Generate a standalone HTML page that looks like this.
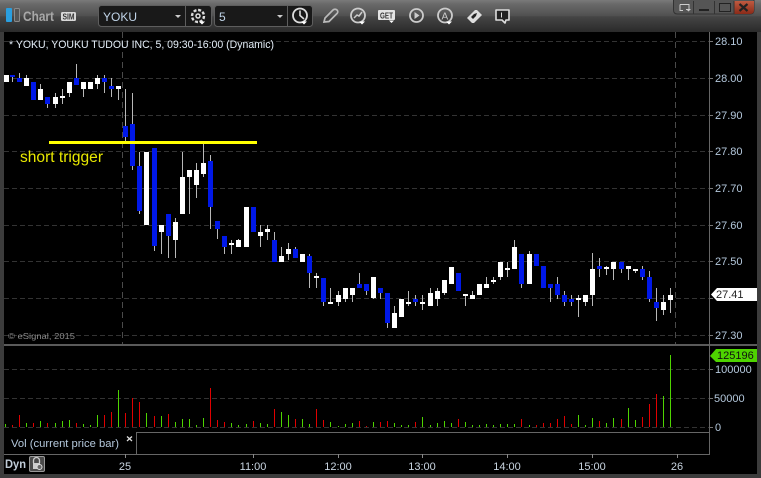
<!DOCTYPE html>
<html><head><meta charset="utf-8"><style>
html,body{margin:0;padding:0;background:#000;width:761px;height:478px;overflow:hidden}
svg{display:block;position:absolute;left:0;top:0}
text{font-family:"Liberation Sans",Arial,sans-serif}
</style></head><body>
<svg width="761" height="478" viewBox="0 0 761 478" xmlns="http://www.w3.org/2000/svg">
<defs>
<linearGradient id="tb" x1="0" y1="0" x2="0" y2="1"><stop offset="0" stop-color="#7a7a7a"/><stop offset=".12" stop-color="#6a6a6a"/><stop offset=".5" stop-color="#505050"/><stop offset=".52" stop-color="#454545"/><stop offset="1" stop-color="#2a2a2a"/></linearGradient>
<linearGradient id="cl" x1="0" y1="0" x2="0" y2="1"><stop offset="0" stop-color="#c05a40"/><stop offset="1" stop-color="#8a2a18"/></linearGradient>
</defs>
<rect width="761" height="478" fill="#3c3c3c"/>
<rect width="761" height="32" fill="url(#tb)"/>
<rect x="4" y="32" width="753" height="442" fill="#000"/>

<!-- toolbar left -->
<rect x="6" y="8" width="6" height="14" rx="1" fill="#2a9fe0"/>
<rect x="14.500" y="8.500" width="5" height="13" rx="1" fill="#555" stroke="#8a8a8a"/>
<text x="23" y="21" font-size="14" fill="#a8a8a8" font-weight="bold" textLength="31" lengthAdjust="spacingAndGlyphs">Chart</text>
<rect x="61" y="12" width="15" height="9" rx="1.500" fill="#d8d8d8"/>
<text x="62.500" y="19.500" font-size="8" font-weight="bold" fill="#333" textLength="12" lengthAdjust="spacingAndGlyphs">SIM</text>

<!-- dropdown 1 -->
<rect x="98.500" y="5.500" width="113" height="21" rx="3" fill="#191919" stroke="#5e5e5e"/>
<path d="M185.500 6V26" stroke="#5e5e5e"/>
<text x="103" y="21" font-size="12" fill="#c0d4e8">YOKU</text>
<path d="M175 15h6l-3 3z" fill="#ccc"/>
<circle cx="198" cy="16" r="6" fill="none" stroke="#ddd" stroke-width="2.400" stroke-dasharray="3 1.700"/>
<circle cx="198" cy="16" r="2" fill="none" stroke="#ddd" stroke-width="1.500"/>
<path d="M199 21.500h6l-3 3z" fill="#fff"/>

<!-- dropdown 2 -->
<rect x="214.500" y="5.500" width="98" height="21" rx="3" fill="#191919" stroke="#5e5e5e"/>
<path d="M287.500 6V26" stroke="#5e5e5e"/>
<text x="219" y="21" font-size="12" fill="#c0d4e8">5</text>
<path d="M277 15h6l-3 3z" fill="#ccc"/>
<circle cx="300" cy="15.500" r="7" fill="none" stroke="#ddd" stroke-width="1.800"/>
<path d="M300 10.500V15.500L304 19" fill="none" stroke="#ddd" stroke-width="1.600"/>
<path d="M301 21.500h6l-3 3z" fill="#fff"/>

<!-- pencil -->
<path d="M324 22l1-4 8-8c1-1 3-1 4 0s1 2.500 0 3.500l-8 8z" fill="none" stroke="#bbb" stroke-width="1.700"/>
<!-- gauge -->
<circle cx="358" cy="15.500" r="7" fill="none" stroke="#ccc" stroke-width="1.800"/>
<path d="M354 18l3-3 2 1 3-4" fill="none" stroke="#ccc" stroke-width="1.500"/>
<path d="M359 21.500h6l-3 3z" fill="#fff"/>
<!-- GET -->
<rect x="378" y="10" width="17" height="10" rx="1" fill="#e4e4e4"/>
<text x="380" y="18.500" font-size="8" font-weight="bold" fill="#333" textLength="13" lengthAdjust="spacingAndGlyphs">GET</text>
<path d="M389 20.500h5l-2.500 2.500z" fill="#fff"/>
<!-- play -->
<circle cx="416.500" cy="15.500" r="6.500" fill="none" stroke="#ccc" stroke-width="1.800"/>
<path d="M414.500 12l5 3.500-5 3.500z" fill="#ccc"/>
<!-- A -->
<circle cx="445" cy="15.500" r="7" fill="none" stroke="#ccc" stroke-width="1.800"/>
<text x="441.500" y="19.500" font-size="10" fill="#ccc">A</text>
<path d="M446 21.500h6l-3 3z" fill="#fff"/>
<!-- diamond -->
<path d="M467 18l8-8 2 0 5 5-8 8-2 0z" fill="#ddd"/>
<path d="M471 17l3-3 3-1-1 3-3 3z" fill="#222"/>
<!-- speech -->
<path d="M496 10h13v10h-3l-1 3-3-3h-6z" fill="#222" stroke="#ddd" stroke-width="1.600" stroke-linejoin="round"/>
<path d="M501.500 12.500v5" stroke="#ddd"/>

<!-- window buttons -->
<path d="M673.500 0V10q0 4 4 4H750q4 0 4-4V0" fill="#555" stroke="#333"/>
<path d="M734 1h20v9q0 4-4 4h-16z" fill="url(#cl)"/>
<path d="M693.500 1V14M714.500 1V14M734 1V14" stroke="#333"/>
<path d="M680 4.500h9v5h-3" fill="none" stroke="#ccc"/>
<path d="M680 4.500v6h3" fill="none" stroke="#ccc"/>
<path d="M686 9h5l-2.500 2.500z" fill="#ccc"/>
<rect x="699" y="9" width="10" height="2" fill="#222"/>
<rect x="719.500" y="3.500" width="11" height="8" fill="none" stroke="#222"/>
<path d="M739.500 4l8 7M747.500 4l-8 7" stroke="#222" stroke-width="2.200"/>

<!-- grid -->
<g stroke="#333" stroke-dasharray="5 3">
<path d="M4 41.500H710M4 78.500H710M4 115.500H710M4 151.500H710M4 188.500H710M4 225.500H710M4 261.500H710M4 298.500H710M4 335.500H710"/>
<path d="M4 369.500H710M4 398.500H710M4 427.500H710"/>
</g>
<path d="M122.500 32V344M675.500 32V344" stroke="#4a4a4a" stroke-dasharray="6 4"/>

<!-- wicks -->
<path stroke="#b8b8b8" fill="none" d="M12.500 75V82M19.500 73V82M26.500 75V86M40.500 84V100M47.500 97V108M55.500 93V108M62.500 89V104M69.500 82V97M76.500 64V85M83.500 82V97M97.500 75V89M104.500 75V93M111.500 78V97M118.500 86V100M125.500 89V141M132.500 93V170M139.500 152V214M154.500 148V251M161.500 225V254M168.500 214V258M175.500 218V258M182.500 152V214M189.500 170V214M196.500 163V198M203.500 144V177M210.500 155V229M217.500 221V239M224.500 236V254M231.500 240V254M238.500 239V247M260.500 225V247M267.500 225V240M274.500 232V262M281.500 247V262M288.500 243V260M295.500 247V258M309.500 254V288M316.500 273V288M323.500 278V306M330.500 288V304M338.500 291V306M345.500 288V302M352.500 288V302M359.500 273V288M366.500 284V295M373.500 277V299M380.500 288V299M387.500 293V328M394.500 306V328M408.500 291V306M415.500 295V306M422.500 295V310M430.500 288V306M437.500 288V306M444.500 280V295M493.500 277V284M486.500 277V288M500.500 262V280M507.500 262V277M514.500 240V269M521.500 254V288M529.500 251V284M550.500 284V302M557.500 277V299M564.500 291V306M571.500 295V306M578.500 295V317M585.500 295V306M592.500 253V306M599.500 258V277M606.500 266V275M613.500 262V280M621.500 262V273M628.500 266V280M635.500 269V273M642.500 266V280M649.500 271V302M656.500 288V321M663.500 295V315M670.500 288V313M465.500 294V306M472.500 291V299"/>

<!-- white bodies -->
<path fill="#fff" d="M4 75h5v7h-5zM24 78h5v8h-5zM38 89h5v11h-5zM53 97h5v7h-5zM60 96h5v2h-5zM67 82h5v11h-5zM81 82h5v7h-5zM88 82h5v7h-5zM95 78h5v6h-5zM116 86h5v3h-5zM144 152h5v73h-5zM159 225h5v7h-5zM173 222h5v18h-5zM180 177h5v37h-5zM187 170h5v7h-5zM194 170h5v15h-5zM201 163h5v11h-5zM229 243h5v2h-5zM236 240h5v7h-5zM244 207h5v40h-5zM258 232h5v4h-5zM265 229h5v3h-5zM279 256h5v6h-5zM286 249h5v5h-5zM300 254h5v8h-5zM314 276h5v2h-5zM328 302h5v2h-5zM336 295h5v7h-5zM343 288h5v11h-5zM350 288h5v7h-5zM371 277h5v21h-5zM392 313h5v15h-5zM399 299h5v18h-5zM406 302h5v2h-5zM420 302h5v2h-5zM428 293h5v13h-5zM435 291h5v8h-5zM442 280h5v13h-5zM449 267h5v17h-5zM463 294h5v2h-5zM470 295h5v4h-5zM477 284h5v11h-5zM484 284h5v4h-5zM491 280h5v2h-5zM498 262h5v15h-5zM505 268h5v2h-5zM512 247h5v22h-5zM527 254h5v30h-5zM576 298h5v2h-5zM583 295h5v7h-5zM590 269h5v26h-5zM604 267h5v2h-5zM611 262h5v7h-5zM626 266h5v3h-5zM633 269h5v2h-5zM661 302h5v8h-5zM668 295h5v5h-5z"/>

<!-- blue bodies -->
<path fill="#0018e8" d="M10 75h5v2h-5zM17 78h5v4h-5zM31 82h5v18h-5zM45 97h5v7h-5zM74 78h5v7h-5zM102 78h5v4h-5zM109 86h5v3h-5zM123 126h5v11h-5zM130 124h5v42h-5zM137 166h5v45h-5zM152 148h5v98h-5zM166 214h5v22h-5zM208 161h5v46h-5zM215 221h5v8h-5zM222 236h5v11h-5zM251 207h5v25h-5zM272 240h5v22h-5zM293 249h5v9h-5zM307 256h5v17h-5zM321 278h5v24h-5zM357 284h5v4h-5zM364 284h5v7h-5zM378 288h5v5h-5zM385 293h5v30h-5zM413 299h5v3h-5zM456 273h5v18h-5zM519 254h5v30h-5zM534 254h5v12h-5zM541 266h5v22h-5zM548 284h5v4h-5zM555 284h5v11h-5zM562 295h5v7h-5zM569 299h5v3h-5zM597 266h5v3h-5zM619 262h5v7h-5zM640 269h5v8h-5zM647 277h5v22h-5zM654 302h5v6h-5z"/>

<!-- trigger -->
<rect x="49" y="141" width="208" height="3" fill="#ffff00"/>
<text x="20" y="162" font-size="15.500" fill="#e8e800" textLength="83" lengthAdjust="spacingAndGlyphs">short trigger</text>

<!-- titles -->
<text x="9" y="48" font-size="10.700" fill="#e4eef8" textLength="265" lengthAdjust="spacingAndGlyphs">* YOKU, YOUKU TUDOU INC, 5, 09:30-16:00 (Dynamic)</text>
<text x="8" y="339" font-size="8.500" fill="#8a8a8a" textLength="67" lengthAdjust="spacingAndGlyphs">© eSignal, 2015</text>

<!-- price axis labels -->
<g font-size="11" fill="#b4c8dc">
<text x="715" y="45">28.10</text><text x="715" y="82">28.00</text><text x="715" y="119">27.90</text><text x="715" y="155">27.80</text><text x="715" y="192">27.70</text><text x="715" y="229">27.60</text><text x="715" y="265">27.50</text><text x="715" y="339">27.30</text>
</g>
<g stroke="#777"><path d="M710 41.500h3M710 78.500h3M710 115.500h3M710 151.500h3M710 188.500h3M710 225.500h3M710 261.500h3M710 298.500h3M710 335.500h3M710 369.500h3M710 398.500h3M710 427.500h3"/></g>
<path d="M711 294.500l6-6.500h40v13h-40z" fill="#fff"/>
<text x="716" y="298" font-size="11" fill="#222">27.41</text>

<!-- dividers -->
<rect x="4" y="344" width="753" height="2" fill="#5a5a5a"/>
<path d="M709.500 32V455" stroke="#666"/>
<path d="M136 432.500H709M136.500 432V454M4 454.500H710" stroke="#666" fill="none"/>

<!-- volume green -->
<path stroke="#4ed400" fill="none" d="M5.500 424V427M26.500 423V427M40.500 421V427M55.500 423V427M62.500 421V427M69.500 420V427M83.500 424V427M90.500 425V427M97.500 415V427M118.500 390V427M146.500 413V427M161.500 416V427M175.500 422V427M182.500 419V427M189.500 419V427M196.500 425V427M203.500 418V427M231.500 423V427M238.500 425V427M246.500 424V427M260.500 423V427M267.500 424V427M281.500 412V427M288.500 415V427M302.500 419V427M309.500 424V427M330.500 422V427M338.500 426V427M345.500 424V427M352.500 423V427M373.500 422V427M394.500 423V427M401.500 425V427M408.500 425V427M422.500 417V427M430.500 425V427M437.500 423V427M444.500 421V427M451.500 423V427M465.500 422V427M472.500 425V427M479.500 425V427M486.500 424V427M493.500 425V427M500.500 424V427M507.500 424V427M514.500 424V427M529.500 425V427M578.500 415V427M585.500 425V427M592.500 418V427M606.500 423V427M613.500 418V427M628.500 408V427M635.500 420V427M663.500 396V427M670.500 355V427"/>
<!-- volume red -->
<path stroke="#e00000" fill="none" d="M12.500 425V427M19.500 415V427M33.500 423V427M47.500 423V427M76.500 423V427M104.500 415V427M111.500 412V427M125.500 413V427M132.500 398V427M139.500 402V427M154.500 416V427M168.500 414V427M210.500 388V427M217.500 420V427M224.500 422V427M253.500 421V427M274.500 409V427M295.500 419V427M316.500 409V427M323.500 420V427M359.500 421V427M366.500 426V427M380.500 422V427M387.500 421V427M415.500 422V427M458.500 419V427M521.500 419V427M536.500 425V427M543.500 423V427M550.500 423V427M557.500 419V427M564.500 416V427M571.500 424V427M599.500 421V427M621.500 419V427M642.500 417V427M649.500 404V427M656.500 394V427"/>

<!-- volume axis -->
<path d="M710 356l6-7h41v13h-41z" fill="#4ed400"/>
<text x="717" y="359" font-size="11" fill="#111">125196</text>
<g font-size="11" fill="#b4c8dc">
<text x="715" y="373">100000</text><text x="714" y="402">50000</text><text x="715" y="431">0</text>
</g>

<!-- vol label -->
<text x="11" y="447" font-size="10.700" fill="#b4c8dc" textLength="108" lengthAdjust="spacingAndGlyphs">Vol (current price bar)</text>
<path d="M127 436.500l5 4.500M132 436.500l-5 4.500" stroke="#ddd" stroke-width="1.300"/>

<!-- x axis -->
<path d="M125.500 454v4M253.500 454v4M338.500 454v4M422.500 454v4M507.500 454v4M592.500 454v4M677.500 454v4" stroke="#888"/>
<g font-size="11" fill="#c8d4e0" text-anchor="middle">
<text x="125" y="470">25</text><text x="253" y="470">11:00</text><text x="338" y="470">12:00</text><text x="422" y="470">13:00</text><text x="507" y="470">14:00</text><text x="592" y="470">15:00</text><text x="677" y="470">26</text>
</g>
<text x="5" y="468" font-size="12" font-weight="bold" fill="#c0ccd8" textLength="21" lengthAdjust="spacingAndGlyphs">Dyn</text>
<rect x="29.500" y="456.500" width="15" height="15" rx="1.500" fill="#4a4a4a" stroke="#999"/>
<path d="M33.500 463v-2.500a3 3 0 0 1 6 0V463" fill="none" stroke="#ccc" stroke-width="1.300"/>
<rect x="33" y="463" width="7" height="6" fill="#ccc"/>
<circle cx="39.500" cy="467" r="2.500" fill="#666" stroke="#ddd"/>
</svg>
</body></html>
